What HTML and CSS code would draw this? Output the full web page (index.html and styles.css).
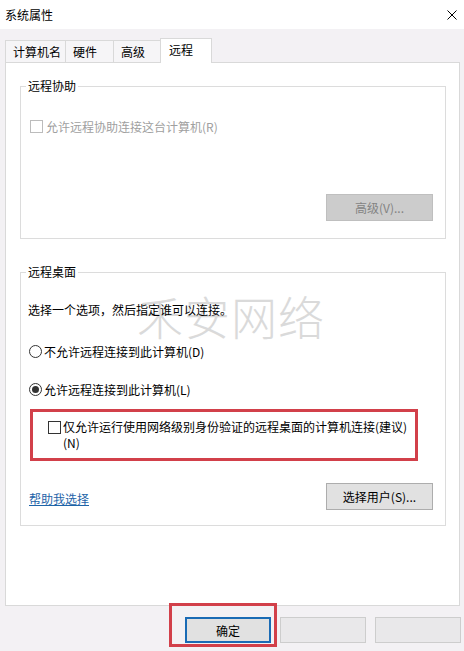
FILE: index.html
```html
<!DOCTYPE html>
<html>
<head>
    <meta charset="UTF-8">
    <title>系统属性</title>
    <link rel="stylesheet" href="styles.css">
</head>
<body>
    <div class="titlebar">
        <div class="title">系统属性</div>
        <svg class="close" width="10" height="10" viewBox="0 0 10 10">
            <path d="M0.5 0.5L9.5 9.5M9.5 0.5L0.5 9.5" stroke="#000" stroke-width="1" fill="none"/>
        </svg>
    </div>

    <div class="tabs">
        <div class="tab tab-name">计算机名</div>
        <div class="tab tab-hw">硬件</div>
        <div class="tab tab-adv">高级</div>
        <div class="tab tab-remote active">远程</div>
    </div>

    <div class="panel">
        <div class="watermark">禾安网络</div>

        <div class="group group-assist">
            <div class="group-title"><span>远程协助</span></div>
            <div class="check-row disabled">
                <span class="checkbox"></span>允许远程协助连接这台计算机(R)
            </div>
            <div class="btn-row">
                <button class="btn btn-disabled">高级(V)...</button>
            </div>
        </div>

        <div class="group group-desktop">
            <div class="group-title"><span>远程桌面</span></div>
            <div class="intro">选择一个选项，然后指定谁可以连接。</div>
            <div class="radio-row first">
                <span class="radio"></span>不允许远程连接到此计算机(D)
            </div>
            <div class="radio-row">
                <span class="radio checked"></span>允许远程连接到此计算机(L)
            </div>
            <div class="nla-box">
                <span class="checkbox"></span>
                <span class="nla-text">仅允许运行使用网络级别身份验证的远程桌面的计算机连接(建议)<br>(N)</span>
            </div>
            <div class="action-row">
                <a class="help-link" href="#">帮助我选择</a>
                <button class="btn btn-users">选择用户(S)...</button>
            </div>
        </div>
    </div>

    <div class="footer">
        <div class="ok-wrap">
            <button class="btn btn-ok">确定</button>
            <div class="highlight"></div>
        </div>
        <button class="btn btn-blank"></button>
        <button class="btn btn-blank"></button>
    </div>
</body>
</html>
```

FILE: styles.css
```css
body {
    width: 464px;
    height: 651px;
    margin: 0;
    overflow: hidden;
    font-family: "Noto Sans CJK SC", "Microsoft YaHei", sans-serif;
    font-size: 12px;
    color: #000;
    background: #f3f1f4;
}
.titlebar {
    height: 29px;
    display: flex;
    align-items: center;
    justify-content: space-between;
    padding: 0 7px 0 5px;
    background: #fff;
}
.tabs {
    display: flex;
    align-items: flex-end;
    height: 24px;
    margin-top: 9px;
    padding-left: 5px;
}
.tab {
    box-sizing: border-box;
    height: 22px;
    padding-left: 7px;
    line-height: 21px;
    border: 1px solid #d9d9d9;
    border-bottom: none;
    background: #f6f5f7;
    margin-left: -1px;
}
.tab-name {
    width: 61px;
    margin-left: 0;
}
.tab-hw {
    width: 49px;
}
.tab-adv {
    width: 48px;
}
.tab-remote {
    width: 52px;
    padding-left: 8px;
}
.tab.active {
    height: 25px;
    margin-bottom: -1px;
    background: #fff;
    position: relative;
    z-index: 1;
}
.panel {
    position: relative;
    box-sizing: border-box;
    width: 455px;
    height: 544px;
    margin-left: 5px;
    border: 1px solid #d9d9d9;
    background: #fff;
}
.watermark {
    position: absolute;
    left: 131px;
    top: 229px;
    font-size: 46px;
    line-height: 46px;
    letter-spacing: 1px;
    font-weight: 300;
    color: #dadada;
    white-space: nowrap;
}
.group {
    position: relative;
    border: 1px solid #dcdcdc;
    margin: 23px 13px 0 14px;
}
.group-desktop {
    margin-top: 33px;
}
.group-title {
    height: 16px;
    line-height: 16px;
    margin: -9px 0 0 5px;
}
.group-title span {
    background: #fff;
    padding: 0 2px;
}
.check-row {
    display: flex;
    align-items: center;
    height: 16px;
    margin: 24px 0 0 9px;
}
.check-row.disabled {
    color: #a0a0a0;
}
.checkbox {
    box-sizing: border-box;
    width: 13px;
    height: 13px;
    border: 1px solid #333;
    background: #fff;
    margin-right: 3px;
    flex-shrink: 0;
}
.disabled .checkbox {
    border-color: #bcbcbc;
}
.btn-row {
    display: flex;
    justify-content: flex-end;
    margin: 60px 12px 17px 0;
}
.btn {
    box-sizing: border-box;
    height: 27px;
    padding: 0;
    font-family: inherit;
    font-size: 12px;
    color: #000;
    background: #e1e1e1;
    border: 1px solid #adadad;
}
.btn-disabled {
    width: 107px;
    background: #cccccc;
    border-color: #bfbfbf;
    color: #838383;
}
.intro {
    height: 16px;
    line-height: 16px;
    margin: 22px 0 0 7px;
}
.radio-row {
    display: flex;
    align-items: center;
    height: 16px;
    margin: 22px 0 0 8px;
}
.radio-row.first {
    margin-top: 25px;
}
.radio {
    box-sizing: border-box;
    width: 13px;
    height: 13px;
    border: 1px solid #333;
    border-radius: 50%;
    margin-right: 2px;
    display: flex;
    align-items: center;
    justify-content: center;
}
.radio.checked::after {
    content: '';
    width: 7px;
    height: 7px;
    border-radius: 50%;
    background: #333;
}
.nla-box {
    box-sizing: border-box;
    width: 388px;
    margin: 12px 0 0 9px;
    padding: 7px 0 7px 15px;
    border: 3px solid #d2404a;
    display: flex;
    align-items: flex-start;
}
.nla-box .checkbox {
    margin: 2px 2px 0 0;
}
.nla-text {
    line-height: 16px;
    white-space: nowrap;
}
.action-row {
    display: flex;
    justify-content: space-between;
    align-items: center;
    margin: 22px 12px 15px 8px;
}
.help-link {
    color: #1e64a8;
    text-decoration: underline;
    padding-top: 3px;
}
.btn-users {
    width: 107px;
}
.footer {
    display: flex;
    justify-content: flex-end;
    gap: 9px;
    margin-top: 11px;
    padding-right: 3px;
}
.ok-wrap {
    position: relative;
}
.btn-ok {
    display: block;
    width: 86px;
    height: 26px;
    border: 2px solid #1a6bb5;
}
.highlight {
    position: absolute;
    left: -16px;
    top: -14px;
    right: -6px;
    bottom: -4px;
    border: 3px solid #d2404a;
    pointer-events: none;
}
.btn-blank {
    width: 86px;
    height: 26px;
    background: #e9e8ea;
    border-color: #cdcdcd;
}
```
